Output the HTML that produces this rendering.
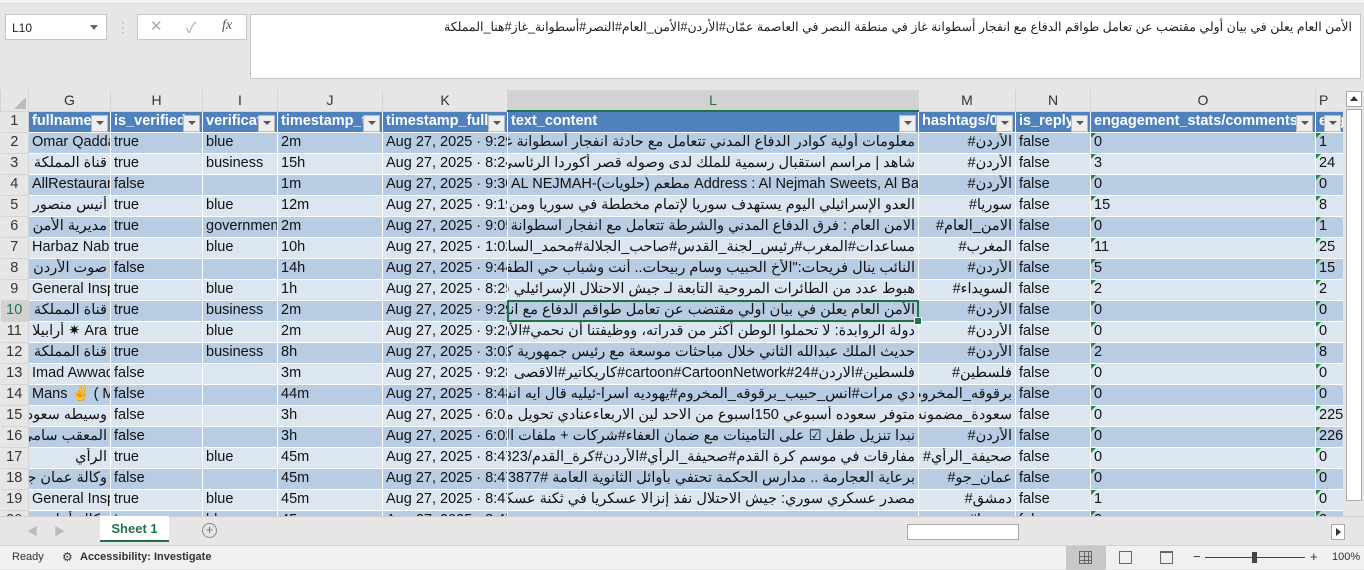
<!DOCTYPE html>
<html><head><meta charset="utf-8">
<style>
*{box-sizing:border-box;margin:0;padding:0}
body{width:1364px;height:569px;overflow:hidden;background:#e6e6e6;font-family:"Liberation Sans","Noto Sans CJK SC",sans-serif;position:relative}
.abs{position:absolute}
#nb{left:5px;top:14px;width:102px;height:26px;background:#fff;border:1px solid #c6c6c6;font-size:12px;padding:6px 0 0 6px;color:#222}
#nb:after{content:"";position:absolute;right:8px;top:10px;border:4px solid transparent;border-top:5px solid #666}
#fx{left:137px;top:14px;width:110px;height:26px;background:#fff;border:1px solid #c6c6c6;font-size:15px;color:#aaa}
#fb{left:250px;top:14px;width:1111px;height:65px;background:#fff;border:1px solid #c6c6c6;font-size:12.5px;direction:rtl;padding:4px 8px;color:#222;font-family:"Liberation Sans","Noto Sans CJK SC",sans-serif}
table{position:absolute;left:0;top:90px;border-collapse:collapse;table-layout:fixed;width:1343px;font-size:14.5px}
td{height:21px;border:1px solid #fff;white-space:nowrap;overflow:hidden;padding:0 3px;color:#111;position:relative;line-height:19px}
tr.ch td{background:#e6e6e6;border:1px solid #d4d4d4;border-top:none;text-align:center;color:#333;font-size:14px}
td.rn{background:#e6e6e6;text-align:center;border:1px solid #d4d4d4;border-top:none;border-left:none;color:#333;padding:0}
tr.h td{background:#4f81bd;color:#fff;font-weight:bold;font-size:14.5px}
tr.h td.rn{background:#e6e6e6;color:#333;font-weight:normal}
tr.h td:not(.rn):after{content:"";position:absolute;right:2px;top:3px;width:15px;height:15px;background:#eee;border:1px solid #bbb}
tr.h td:not(.rn):before{content:"";position:absolute;right:6px;top:9px;border:4px solid transparent;border-top:4px solid #555;z-index:2}
tr.a td{background:#b8cce4}
tr.b td{background:#dce6f1}
tr.a td.rn,tr.b td.rn{background:#e6e6e6}
.r{direction:rtl;text-align:right}
.l{direction:rtl;text-align:left}
.t:before{content:"";position:absolute;left:0;top:0;border-top:5px solid #1e8c2e;border-right:5px solid transparent}
#sel{left:507px;top:300px;width:412px;height:22px;border:2px solid #217346}
#sel:after{content:"";position:absolute;right:-5px;bottom:-5px;width:6px;height:6px;background:#217346;border:1px solid #fff}
#tabs{left:0;top:516px;width:1364px;height:29px;background:#e6e6e6;border-top:1px solid #ccc}
#status{left:0;top:545px;width:1364px;height:24px;background:#f0f0f0;border-top:1px solid #d0d0d0;font-size:11px;color:#333}
#vs{left:1343px;top:90px;width:21px;height:426px;background:#e6e6e6}
</style></head><body>
<div class="abs" style="left:0;top:0;width:1364px;height:4px;background:#f3f3f3;border-bottom:1px solid #ddd"></div>
<div id="nb" class="abs">L10</div>
<div class="abs" style="left:121px;top:20px;color:#999;font-size:12px;line-height:5px">·<br>·<br>·</div>
<div id="fx" class="abs"><span style="position:absolute;left:12px;top:2px">✕</span><span style="position:absolute;left:48px;top:2px">✓</span><span style="position:absolute;left:84px;top:3px;color:#555;font-style:italic;font-family:'Liberation Serif',serif;font-size:14px">fx</span></div>
<div id="fb" class="abs">الأمن العام يعلن في بيان أولي مقتضب عن تعامل طواقم الدفاع مع انفجار أسطوانة غاز في منطقة النصر في العاصمة عمّان#الأردن#الأمن_العام#النصر#أسطوانة_غاز#هنا_المملكة</div>

<table>
<colgroup><col style="width:28px"><col style="width:82px"><col style="width:92px"><col style="width:75px"><col style="width:105px"><col style="width:125px"><col style="width:411px"><col style="width:97px"><col style="width:75px"><col style="width:225px"><col style="width:28px"></colgroup>
<tr class="ch"><td class="rn" style="background:#e6e6e6"><span style="position:absolute;right:2px;bottom:2px;border-left:12px solid transparent;border-bottom:12px solid #bbb"></span></td><td>G</td><td>H</td><td>I</td><td>J</td><td>K</td><td style="background:#d2d2d2;border-bottom:2px solid #217346;color:#217346">L</td><td>M</td><td>N</td><td>O</td><td style="text-align:left">P</td></tr>
<tr class="h"><td class="rn">1</td><td>fullname</td><td>is_verified</td><td>verificat</td><td>timestamp_t</td><td>timestamp_full</td><td>text_content</td><td>hashtags/0</td><td>is_reply</td><td>engagement_stats/comments</td><td style="overflow:hidden">eng</td></tr>
<tr class="a"><td class="rn">2</td><td>Omar Qaddar</td><td>true</td><td>blue</td><td>2m</td><td>Aug 27, 2025 · 9:29</td><td class="r">معلومات أولية كوادر الدفاع المدني تتعامل مع حادثة انفجار أسطوانة غاز في أ</td><td class="r">الأردن#</td><td>false</td><td class="t">0</td><td class="t">1</td></tr>
<tr class="b"><td class="rn">3</td><td class="r">قناة المملكة</td><td>true</td><td>business</td><td>15h</td><td>Aug 27, 2025 · 8:24</td><td class="r">شاهد | مراسم استقبال رسمية للملك لدى وصوله قصر أكوردا الرئاسي في أستانا</td><td class="r">الأردن#</td><td>false</td><td class="t">3</td><td class="t">24</td></tr>
<tr class="a"><td class="rn">4</td><td>AllRestaurants</td><td>false</td><td></td><td>1m</td><td>Aug 27, 2025 · 9:30</td><td>AL NEJMAH-(مطعم (حلويات Address : Al Nejmah Sweets, Al Baya</td><td class="r">الأردن#</td><td>false</td><td class="t">0</td><td class="t">0</td></tr>
<tr class="b"><td class="rn">5</td><td class="r">أنيس منصور</td><td>true</td><td>blue</td><td>12m</td><td>Aug 27, 2025 · 9:19</td><td class="r">العدو الإسرائيلي اليوم يستهدف سوريا لإتمام مخططة في سوريا ومن بعدها يتو</td><td class="r">سوريا#</td><td>false</td><td class="t">15</td><td class="t">8</td></tr>
<tr class="a"><td class="rn">6</td><td class="r">مديرية الأمن العام</td><td>true</td><td>government</td><td>2m</td><td>Aug 27, 2025 · 9:05</td><td class="r">الامن العام : فرق الدفاع المدني والشرطة تتعامل مع انفجار اسطوانة غاز داخل</td><td class="r">الامن_العام#</td><td>false</td><td class="t">0</td><td class="t">1</td></tr>
<tr class="b"><td class="rn">7</td><td>Harbaz Nabil</td><td>true</td><td>blue</td><td>10h</td><td>Aug 27, 2025 · 1:02</td><td class="r">مساعدات#المغرب#رئيس_لجنة_القدس#صاحب_الجلالة#محمد_السادس#نصره</td><td class="r">المغرب#</td><td>false</td><td class="t">11</td><td class="t">25</td></tr>
<tr class="a"><td class="rn">8</td><td class="r">صوت الأردن الإخباري</td><td>false</td><td></td><td>14h</td><td>Aug 27, 2025 · 9:44</td><td class="r">النائب ينال فريحات:"الأخ الحبيب وسام ربيحات.. أنت وشباب حي الطفالة</td><td class="r">الأردن#</td><td>false</td><td class="t">5</td><td class="t">15</td></tr>
<tr class="b"><td class="rn">9</td><td>General Inspector</td><td>true</td><td>blue</td><td>1h</td><td>Aug 27, 2025 · 8:25</td><td class="r">هبوط عدد من الطائرات المروحية التابعة لـ جيش الاحتلال الإسرائيلي في#السو</td><td class="r">السويداء#</td><td>false</td><td class="t">2</td><td class="t">2</td></tr>
<tr class="a"><td class="rn" style="background:#d2d2d2;color:#217346">10</td><td class="r">قناة المملكة</td><td>true</td><td>business</td><td>2m</td><td>Aug 27, 2025 · 9:29</td><td class="r">الأمن العام يعلن في بيان أولي مقتضب عن تعامل طواقم الدفاع مع انفجار أسطوانة</td><td class="r">الأردن#</td><td>false</td><td class="t">0</td><td class="t">0</td></tr>
<tr class="b"><td class="rn">11</td><td class="r">Ara ✷ أرابيلا</td><td>true</td><td>blue</td><td>2m</td><td>Aug 27, 2025 · 9:29</td><td class="r">دولة الروابدة: لا تحملوا الوطن أكثر من قدراته، ووظيفتنا أن نحمي#الأردن 📌</td><td class="r">الأردن#</td><td>false</td><td class="t">0</td><td class="t">0</td></tr>
<tr class="a"><td class="rn">12</td><td class="r">قناة المملكة</td><td>true</td><td>business</td><td>8h</td><td>Aug 27, 2025 · 3:02</td><td class="r">حديث الملك عبدالله الثاني خلال مباحثات موسعة مع رئيس جمهورية كازخستان</td><td class="r">الأردن#</td><td>false</td><td class="t">2</td><td class="t">8</td></tr>
<tr class="b"><td class="rn">13</td><td>Imad Awwad</td><td>false</td><td></td><td>3m</td><td>Aug 27, 2025 · 9:28</td><td class="r">فلسطين#الاردن#24#cartoon#CartoonNetwork#كاريكاتير#الاقصى</td><td class="r">فلسطين#</td><td>false</td><td class="t">0</td><td class="t">0</td></tr>
<tr class="a"><td class="rn">14</td><td>Mans ✌ ( M</td><td>false</td><td></td><td>44m</td><td>Aug 27, 2025 · 8:48</td><td class="r">دي مرات#انس_حبيب_برقوقه_المخروم#يهوديه اسرا-ئيليه قال ايه انس حبيب</td><td class="r">برقوقه_المخروم#</td><td>false</td><td class="t">0</td><td class="t">0</td></tr>
<tr class="b"><td class="rn">15</td><td class="r">وسيطه سعوده</td><td>false</td><td></td><td>3h</td><td>Aug 27, 2025 · 6:01</td><td class="r">متوفر سعوده أسبوعي 150اسبوع من الاحد لين الاربعاءعنادي تحويل مقدم</td><td class="r">سعودة_مضمونه#</td><td>false</td><td class="t">0</td><td class="t">225</td></tr>
<tr class="a"><td class="rn">16</td><td class="r">المعقب سامي</td><td>false</td><td></td><td>3h</td><td>Aug 27, 2025 · 6:02</td><td class="r">نبدا تنزيل طفل ☑ على التامينات مع ضمان العفاء#شركات + ملفات التقليد</td><td class="r">الأردن#</td><td>false</td><td class="t">0</td><td class="t">226</td></tr>
<tr class="b"><td class="rn">17</td><td class="r">الرأي</td><td>true</td><td>blue</td><td>45m</td><td>Aug 27, 2025 · 8:47</td><td class="r">مفارقات في موسم كرة القدم#صحيفة_الرأي#الأردن#كرة_القدم/10909823</td><td class="r">صحيفة_الرأي#</td><td>false</td><td class="t">0</td><td class="t">0</td></tr>
<tr class="a"><td class="rn">18</td><td class="r">وكالة عمان جو</td><td>false</td><td></td><td>45m</td><td>Aug 27, 2025 · 8:47</td><td class="r">برعاية العجارمة .. مدارس الحكمة تحتفي بأوائل الثانوية العامة ticle/243877#</td><td class="r">عمان_جو#</td><td>false</td><td class="t">0</td><td class="t">0</td></tr>
<tr class="b"><td class="rn">19</td><td>General Inspector</td><td>true</td><td>blue</td><td>45m</td><td>Aug 27, 2025 · 8:47</td><td class="r">مصدر عسكري سوري: جيش الاحتلال نفذ إنزالا عسكريا في ثكنة عسكرية بالكسوة</td><td class="r">دمشق#</td><td>false</td><td class="t">1</td><td class="t">0</td></tr>
<tr class="a"><td class="rn">20</td><td class="r">وكالة أنباء</td><td>true</td><td>blue</td><td>45m</td><td>Aug 27, 2025 · 8:47</td><td class="r">مصدر</td><td class="r">سوريا#</td><td>false</td><td class="t">2</td><td class="t">2</td></tr>
</table>
<div id="sel" class="abs"></div>

<div id="vs" class="abs">
<div class="abs" style="left:3px;top:1px;width:16px;height:16px;background:#fff;border:1px solid #aaa"><span class="abs" style="left:3px;top:4px;border:4px solid transparent;border-bottom:5px solid #333;border-top:none"></span></div>
<div class="abs" style="left:3px;top:19px;width:16px;height:392px;background:#fff;border:1px solid #aaa"></div>
<div class="abs" style="left:3px;top:430px;width:16px;height:16px;background:#fff;border:1px solid #aaa"></div>
</div>
<div class="abs" style="left:1346px;top:521px;width:16px;height:16px;background:#fff;border:1px solid #aaa"><span class="abs" style="left:3px;top:5px;border:4px solid transparent;border-top:5px solid #333;border-bottom:none"></span></div>

<div id="tabs" class="abs">
<span class="abs" style="left:27px;top:6px;color:#bbb;font-size:11px">◀</span>
<span class="abs" style="left:54px;top:6px;color:#bbb;font-size:11px">▶</span>
<div class="abs" style="left:100px;top:-1px;width:69px;height:26px;background:#fff;border-bottom:2px solid #217346;color:#217346;font-weight:bold;font-size:13px;text-align:center;line-height:26px">Sheet 1</div>
<div class="abs" style="left:202px;top:6px;width:15px;height:15px;border:1px solid #888;border-radius:50%;color:#777;font-size:13px;line-height:12px;text-align:center">+</div>
<div class="abs" style="left:907px;top:7px;width:112px;height:16px;background:#fff;border:1px solid #aaa"></div>
<div class="abs" style="left:1331px;top:7px;width:14px;height:16px;background:#fff;border:1px solid #aaa"><span class="abs" style="left:4px;top:3px;border:4px solid transparent;border-left:5px solid #333;border-right:none"></span></div>
</div>

<div id="status" class="abs">
<span class="abs" style="left:12px;top:5px">Ready</span>
<span class="abs" style="left:62px;top:4px;font-size:12px">⚙</span>
<span class="abs" style="left:80px;top:5px;font-weight:bold">Accessibility: Investigate</span>
<div class="abs" style="left:1066px;top:0;width:40px;height:24px;background:#c8c8c8"></div>
<div class="abs" style="left:1079px;top:5px;width:13px;height:13px;border:1px solid #666;background:linear-gradient(90deg,transparent 4px,#666 4px,#666 5px,transparent 5px,transparent 8px,#666 8px,#666 9px,transparent 9px),linear-gradient(transparent 4px,#666 4px,#666 5px,transparent 5px,transparent 8px,#666 8px,#666 9px,transparent 9px)"></div>
<div class="abs" style="left:1119px;top:5px;width:13px;height:13px;border:1px solid #666"></div>
<div class="abs" style="left:1160px;top:5px;width:13px;height:13px;border:1px solid #666;border-top-width:2px"></div>
<span class="abs" style="left:1193px;top:3px;font-size:13px">−</span>
<div class="abs" style="left:1205px;top:11px;width:100px;height:1px;background:#444"></div>
<div class="abs" style="left:1252px;top:6px;width:5px;height:11px;background:#444"></div>
<span class="abs" style="left:1310px;top:3px;font-size:13px">+</span>
<span class="abs" style="left:1332px;top:5px">100%</span>
</div>
</body></html>
